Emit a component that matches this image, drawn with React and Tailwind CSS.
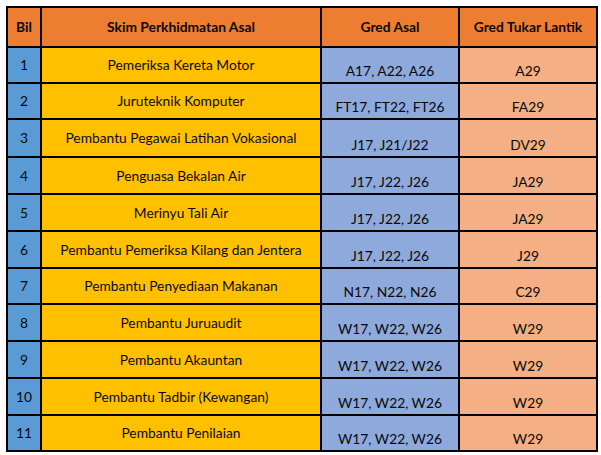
import React from "react";

const rows = [
  ["1", "Pemeriksa Kereta Motor", "A17, A22, A26", "A29", "h-[34px]"],
  ["2", "Juruteknik Komputer", "FT17, FT22, FT26", "FA29", "h-[34px]"],
  ["3", "Pembantu Pegawai Latihan Vokasional", "J17, J21/J22", "DV29", "h-[36px]"],
  ["4", "Penguasa Bekalan Air", "J17, J22, J26", "JA29", "h-[35px]"],
  ["5", "Merinyu Tali Air", "J17, J22, J26", "JA29", "h-[35px]"],
  ["6", "Pembantu Pemeriksa Kilang dan Jentera", "J17, J22, J26", "J29", "h-[35px]"],
  ["7", "Pembantu Penyediaan Makanan", "N17, N22, N26", "C29", "h-[34px]"],
  ["8", "Pembantu Juruaudit", "W17, W22, W26", "W29", "h-[35px]"],
  ["9", "Pembantu Akauntan", "W17, W22, W26", "W29", "h-[35px]"],
  ["10", "Pembantu Tadbir (Kewangan)", "W17, W22, W26", "W29", "h-[35px]"],
  ["11", "Pembantu Penilaian", "W17, W22, W26", "W29", "h-[34px]"],
];

export default function App() {
  return (
    <div className="w-[601px] h-[455px] bg-white pt-[6px] pl-[6px]" style={{ fontFamily: "Lato, 'Open Sans', sans-serif" }}>
      <div className="grid grid-cols-[32px_278px_136px_136px] gap-[2px] p-[2px] bg-black w-[592px] text-[13.8px] text-[#0a0a0a] leading-none">
        <div className="h-[38px] bg-[#ED7D31] flex items-center justify-center font-bold">Bil</div>
        <div className="h-[38px] bg-[#ED7D31] flex items-center justify-center font-bold">Skim Perkhidmatan Asal</div>
        <div className="h-[38px] bg-[#ED7D31] flex items-center justify-center font-bold">Gred Asal</div>
        <div className="h-[38px] bg-[#ED7D31] flex items-center justify-center font-bold">Gred Tukar Lantik</div>
        {rows.map(([n, skim, asal, tukar, h]) => (
          <React.Fragment key={n}>
            <div className={`${h} bg-[#5B9BD5] flex items-center justify-center`}>{n}</div>
            <div className={`${h} bg-[#FFC000] flex items-center justify-center`}>{skim}</div>
            <div className={`${h} bg-[#8EA9DB] flex items-end justify-center pb-[4px]`}>{asal}</div>
            <div className={`${h} bg-[#F4B084] flex items-end justify-center pb-[4px]`}>{tukar}</div>
          </React.Fragment>
        ))}
      </div>
    </div>
  );
}
